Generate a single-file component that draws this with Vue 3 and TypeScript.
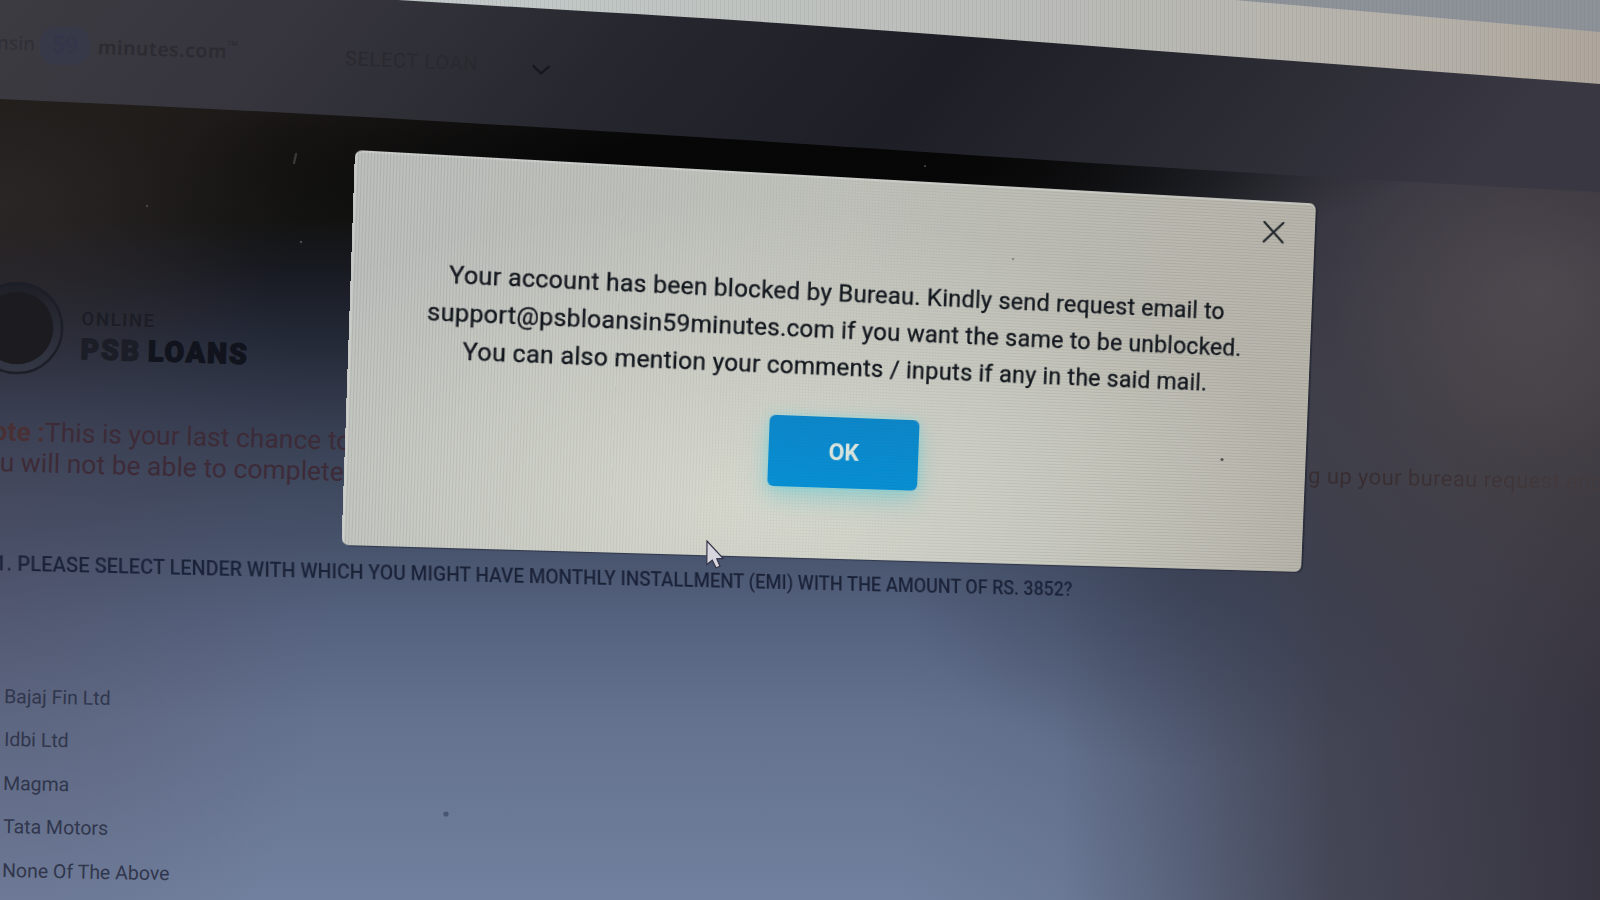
<script setup lang="ts">
import { computed } from 'vue'

interface Point { x: number; y: number }

const message: string[] = [
  'Your account has been blocked by Bureau. Kindly send request email to',
  'support@psbloansin59minutes.com if you want the same to be unblocked.',
  'You can also mention your comments / inputs if any in the said mail.',
]
const lenders: string[] = ['Bajaj Fin Ltd', 'Idbi Ltd', 'Magma', 'Tata Motors', 'None Of The Above']

const dialogSize = { width: 960, height: 382 }
const corners: Point[] = [
  { x: 355, y: 150 },
  { x: 1316, y: 203.5 },
  { x: 1301, y: 572 },
  { x: 341.5, y: 545 },
]

// Projects the flat dialog rectangle onto the tilted screen plane.
function project(q: Point[], w: number, h: number): string {
  const [a, b, c, d] = q
  const dx1 = b.x - c.x, dx2 = d.x - c.x, sx = a.x - b.x + c.x - d.x
  const dy1 = b.y - c.y, dy2 = d.y - c.y, sy = a.y - b.y + c.y - d.y
  const det = dx1 * dy2 - dx2 * dy1
  const g = (sx * dy2 - dx2 * sy) / det
  const k = (dx1 * sy - sx * dy1) / det
  const m = [
    (b.x - a.x + g * b.x) / w, (b.y - a.y + g * b.y) / w, 0, g / w,
    (d.x - a.x + k * d.x) / h, (d.y - a.y + k * d.y) / h, 0, k / h,
    0, 0, 1, 0,
    a.x, a.y, 0, 1,
  ]
  return `matrix3d(${m.map((v) => v.toFixed(8)).join(',')})`
}

const dialogStyle = computed(() => ({
  transform: project(corners, dialogSize.width, dialogSize.height),
}))
</script>

<template>
  <div class="scene">
    <svg class="backdrop" viewBox="0 0 1600 900" aria-hidden="true">
      <defs>
        <linearGradient id="bar" x1="0" x2="1" y1="0" y2="0.1">
          <stop offset="0" stop-color="#3c3b42" />
          <stop offset="0.2" stop-color="#36353d" />
          <stop offset="0.42" stop-color="#26272e" />
          <stop offset="0.62" stop-color="#1e1f26" />
          <stop offset="0.82" stop-color="#2a2b33" />
          <stop offset="1" stop-color="#393742" />
        </linearGradient>
        <linearGradient id="strip" x1="0" x2="1" y1="0" y2="0">
          <stop offset="0" stop-color="#c3cbca" />
          <stop offset="0.5" stop-color="#bbbdb9" />
          <stop offset="0.85" stop-color="#b5b1a9" />
          <stop offset="1" stop-color="#aea69c" />
        </linearGradient>
        <pattern id="fine" width="4" height="4" patternUnits="userSpaceOnUse">
          <rect width="1" height="4" fill="#4d5052" opacity="0.08" />
        </pattern>
      </defs>
      <path d="M0 0H402Q800 22 1000 38T1600 84V192Q1250 174 1000 157T600 131Q300 112 0 99Z" fill="url(#bar)" />
      <path d="M398 0H1600V84Q1250 58 1000 39T600 12Z" fill="url(#strip)" />
      <path d="M1235 0H1600V32Z" fill="#8d9299" />
      <path d="M398 0H1600V84Q1250 58 1000 39T600 12Z" fill="url(#fine)" />
    </svg>

    <div class="page">
      <header class="topbar">
        <span class="brand-start">nsin</span>
        <span class="brand-badge">59</span>
        <span class="brand-end">minutes.com<sup>™</sup></span>
        <span class="menu">SELECT LOAN</span>
        <svg class="chevron" viewBox="0 0 24 14"><path d="M2 2 L12 11 L22 2" /></svg>
      </header>

      <section class="product">
        <svg class="emblem" viewBox="0 0 100 100">
          <defs>
            <linearGradient id="ring" x1="0" x2="0" y1="0" y2="1">
              <stop offset="0" stop-color="#1e1f26" />
              <stop offset="1" stop-color="#343846" />
            </linearGradient>
          </defs>
          <circle cx="50" cy="50" r="46" fill="url(#ring)" stroke="#1d1f28" stroke-width="2.5" />
          <circle cx="50" cy="50" r="37" fill="#1c1b20" />
        </svg>
        <div class="product-name">
          <span class="online">ONLINE</span>
          <strong class="title"><span>PSB</span> LOANS</strong>
        </div>
      </section>

      <section class="notice">
        <div class="notice-text">
          <p><b>ote :</b>This is your last chance to</p>
          <p class="second">u will not be able to complete</p>
        </div>
        <p class="notice-rest">g up your bureau request and</p>
      </section>

      <h1 class="question">1. PLEASE SELECT LENDER WITH WHICH YOU MIGHT HAVE MONTHLY INSTALLMENT (EMI) WITH THE AMOUNT OF RS. 3852?</h1>

      <ul class="lenders">
        <li v-for="name in lenders" :key="name">{{ name }}</li>
      </ul>
    </div>

    <div class="dialog" :style="dialogStyle">
      <svg class="close" viewBox="0 0 26 26"><path d="M2 2 L24 24 M24 2 L2 24" /></svg>
      <div class="message">
        <p v-for="line in message" :key="line"><span>{{ line }}</span></p>
      </div>
      <button class="ok" type="button">OK</button>
    </div>

    <svg class="specks" viewBox="0 0 1600 900" aria-hidden="true">
      <circle cx="1222" cy="459.5" r="1.6" fill="#55564f" />
      <circle cx="446" cy="814" r="2.6" fill="#475472" />
      <circle cx="1013" cy="259" r="1.2" fill="#868883" />
      <circle cx="147" cy="206" r="1.2" fill="#4a4743" />
      <circle cx="301" cy="242" r="1.2" fill="#4a4c4e" />
      <circle cx="925" cy="166" r="1" fill="#4a4c4e" />
      <path d="M296 154 L294 163" stroke="#3a3734" stroke-width="2.4" stroke-linecap="round" />
    </svg>
    <svg class="cursor" viewBox="0 0 18 29"><path d="M1 1 L0.8 24.5 L6.3 20.2 L10 27.8 L14 26.2 L10.8 18.8 L17 18.4 Z" /></svg>
  </div>
</template>

<style>
html, body { overflow: hidden; background: #22232a; }
</style>

<style scoped>
.scene {
  position: relative;
  width: 1600px;
  height: 900px;
  overflow: hidden;
  font-family: Roboto, "Liberation Sans", sans-serif;
  background:
    radial-gradient(ellipse 210px 170px at 1540px 290px, rgba(92, 84, 90, 0.5), transparent),
    radial-gradient(ellipse 420px 330px at 1540px 390px, rgba(76, 71, 73, 0.65), transparent),
    radial-gradient(ellipse 620px 110px at 800px 160px, rgba(5, 5, 6, 0.9) 30%, transparent),
    radial-gradient(ellipse 300px 200px at 1200px 570px, rgba(48, 54, 72, 0.5), transparent),
    linear-gradient(90deg, transparent 900px, rgba(70, 80, 104, 0.14) 1060px, rgba(62, 66, 84, 0.5) 1190px, rgba(60, 60, 73, 0.84) 1330px, rgba(58, 56, 68, 0.92) 1470px, rgba(53, 50, 61, 0.96) 1600px),
    radial-gradient(ellipse 340px 480px at 0 580px, rgba(76, 70, 90, 0.36), transparent),
    radial-gradient(ellipse 300px 200px at 0 200px, rgba(44, 39, 36, 0.8), transparent),
    linear-gradient(180deg, #1c1917 100px, #131312 220px, #171920 265px, #242937 340px, #373f52 430px, #46526a 540px, #55627f 620px, #64728f 720px, #71809e 900px);
}
.backdrop, .specks { position: absolute; inset: 0; width: 1600px; height: 900px; }
.page { position: relative; height: 900px; display: flex; flex-direction: column; }
.topbar { height: 120px; display: flex; align-items: flex-start; color: #2c2b32; }
.brand-start { width: 42px; margin: 28px 0 0 -3px; font: 500 19px/30px "Noto Sans", sans-serif; color: #313037; white-space: nowrap; transform: rotate(2deg); }
.brand-badge { width: 50px; height: 38px; margin: 27px 8px 0 1px; border-radius: 16px; text-align: center; font-size: 24px; line-height: 36px; color: #34354a; background: #383948; }
.brand-end { width: 140px; margin: 32px 0 0; font: 600 19.3px/30px "Noto Sans", sans-serif; letter-spacing: 0.6px; white-space: nowrap; transform: rotate(1.9deg); transform-origin: 0 50%; }
.brand-end sup { font-size: 14px; line-height: 0; }
.menu { width: 132px; margin: 43px 0 0 107px; font-size: 20px; line-height: 30px; letter-spacing: 0.7px; white-space: nowrap; color: #29292f; transform: rotate(2.4deg); transform-origin: 0 50%; }
.chevron { width: 20px; height: 12px; margin: 64px 0 0 54px; fill: none; stroke: #17181d; stroke-width: 2.8; transform: rotate(3deg); }
.product { height: 110px; margin-top: 158px; display: flex; align-items: flex-start; }
.emblem { width: 98px; height: 98px; margin: 1px 0 0 -32px; flex: none; }
.product-name { margin: 28px 0 0 15px; display: flex; flex-direction: column; transform: rotate(1.7deg); transform-origin: 0 50%; color: #11141d; }
.online { font-size: 18.5px; line-height: 26px; font-weight: 500; letter-spacing: 1.6px; color: #1b1d25; }
.title { font-size: 28.5px; line-height: 36px; font-weight: 900; letter-spacing: 1.9px; word-spacing: -2px; white-space: nowrap; -webkit-text-stroke: 1.3px currentColor; }
.title span { color: #1b1e27; }
.notice { height: 100px; margin-top: 27px; display: flex; justify-content: space-between; }
.notice-text { margin-left: -7px; font-size: 26.5px; line-height: 31px; white-space: nowrap; color: #3d2b38; transform: rotate(1.6deg); transform-origin: 0 0; }
.notice-text p { margin: 0; }
.notice-text .second { padding-left: 8px; }
.notice-text b { font-weight: 700; color: #493035; }
.notice-rest { width: 292px; margin: 46px 0 0; font-size: 22px; line-height: 30px; letter-spacing: 0.4px; white-space: nowrap; transform: rotate(1.3deg); transform-origin: 0 50%; color: transparent; background: linear-gradient(90deg, #382d31 20%, #3e3437 60%, #433c3e); background-clip: text; }
.question { margin: 32px 0 0 -5px; font-size: 20px; line-height: 32px; font-weight: 500; white-space: nowrap; color: #1a2238; transform: matrix3d(1.0177, 0.0248, 0, 0.0000639, 0, 1.03, 0, 0, 0, 0, 1, 0, 0, 0, 0, 1); transform-origin: 0 50%; }
.lenders { list-style: none; margin: 96px 0 0 4px; padding: 0; }
.lenders li { height: 43.4px; font-size: 19.5px; line-height: 43px; color: #30364c; transform: rotate(1.1deg); transform-origin: 0 50%; }
.lenders li:nth-child(n + 3) { margin-left: -1px; }
.lenders li:last-child { margin-left: -2px; }
.dialog {
  position: absolute;
  left: 0;
  top: 0;
  width: 960px;
  height: 382px;
  display: flex;
  flex-direction: column;
  align-items: center;
  transform-origin: 0 0;
  border-radius: 7px;
  background:
    linear-gradient(90deg, rgba(255, 255, 255, 0.4), transparent 3px),
    radial-gradient(ellipse 560px 300px at 400px 330px, rgba(218, 220, 209, 0.9), transparent),
    linear-gradient(90deg, #bcbfbb, #bfc1ba 50%, #b8b5ab);
  box-shadow: inset 0 2px 1px rgba(225, 227, 225, 0.45), 2px 1px 1px rgba(20, 26, 40, 0.5);
}
.dialog::before, .dialog::after { content: ""; position: absolute; inset: 0; border-radius: 7px; pointer-events: none; }
.dialog::before { background: repeating-linear-gradient(90deg, rgba(70, 72, 70, 0.12) 0 1px, transparent 1px 3px); mask-image: linear-gradient(100deg, #000 10%, transparent 65%); }
.dialog::after { background: repeating-linear-gradient(180deg, rgba(70, 72, 66, 0.12) 0 1px, transparent 1px 3px); mask-image: linear-gradient(100deg, transparent 35%, #000 80%); }
.close { width: 24px; height: 24px; margin: 20px 32px 0 0; align-self: flex-end; fill: none; stroke: #23282d; stroke-width: 2.4; stroke-linecap: round; }
.message { margin-top: 53.5px; color: #12171e; }
.message p { margin: 0; font-size: 24px; line-height: 37.2px; letter-spacing: 0.25px; text-align: center; white-space: nowrap; -webkit-text-stroke: 0.35px currentColor; }
.ok { position: relative; left: 2px; width: 150px; height: 71px; margin-top: 31px; padding: 0; border: 0; border-radius: 6px; font: 700 23px Roboto, "Liberation Sans", sans-serif; color: #dbe6df; background: linear-gradient(180deg, #0c86c9, #078fd4); box-shadow: 0 10px 24px rgba(70, 195, 205, 0.42), 0 0 8px rgba(140, 220, 225, 0.6); }
.cursor { position: absolute; left: 706px; top: 540px; width: 18px; height: 29px; fill: #d7d6de; stroke: #343448; stroke-width: 1.2; }
</style>
